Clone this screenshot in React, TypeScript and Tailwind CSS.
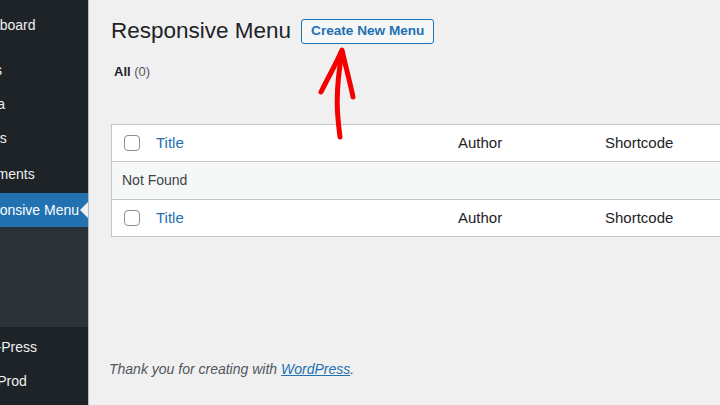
const font = { fontFamily: '"Liberation Sans", Arial, sans-serif' }

function SideItem({ label, active, shift = 'ml-[-33px]' }: { label: string; active?: boolean; shift?: string }) {
  return (
    <div
      className={
        'relative flex h-[34px] items-center text-[14px] ' +
        (active ? 'bg-[#2271b1] text-white' : 'text-[#f0f0f1]')
      }
    >
      <span className={'whitespace-nowrap ' + shift}>{label}</span>
      {active && (
        <span className="absolute right-0 top-1/2 -translate-y-1/2 border-y-[8px] border-r-[8px] border-y-transparent border-r-[#f0f0f1]" />
      )}
    </div>
  )
}

function Checkbox() {
  return <span className="block h-[16px] w-[16px] rounded-[4px] border border-[#8c8f94] bg-white" />
}

function HeadRow({ border }: { border: string }) {
  return (
    <div className={'flex h-[37px] items-center bg-white pl-[12px] text-[15px] ' + border}>
      <Checkbox />
      <span className="ml-[16px] w-[302px] text-[#2271b1]">Title</span>
      <span className="w-[147px] text-[#1d2327]">Author</span>
      <span className="text-[#1d2327]">Shortcode</span>
    </div>
  )
}

export default function App() {
  return (
    <div className="flex h-[405px] w-[720px] overflow-hidden bg-[#f0f0f1]" style={font}>
      <aside className="flex w-[89px] shrink-0 flex-col overflow-hidden border-r border-[#b9bbbe] bg-[#1d2327]">
        <div className="pt-[8px]">
          <SideItem label="Dashboard" />
        </div>
        <div className="mt-[11px]">
          <SideItem label="Posts" />
          <SideItem label="Media" />
          <SideItem label="Pages" />
          <div className="mt-[2px]">
            <SideItem label="Comments" />
          </div>
          <div className="mt-[2px]">
            <SideItem label="Responsive Menu" active />
          </div>
        </div>
        <div className="h-[100px] bg-[#2c3338]" />
        <div className="pt-[3px]">
          <SideItem label="WP-Press" shift="ml-[-26px]" />
          <SideItem label="WP Prod" shift="ml-[-29px]" />
        </div>
      </aside>

      <main className="relative flex min-w-0 flex-1 flex-col pl-[22px] pt-[19px]">
        <div className="flex h-[25px] items-center">
          <h1 className="text-[22.5px] leading-none text-[#1d2327]">Responsive Menu</h1>
          <button className="ml-[10px] h-[25px] rounded-[3px] border border-[#2271b1] bg-[#f6f7f7] px-[9px] text-[13.6px] font-semibold text-[#2271b1]">
            Create New Menu
          </button>
        </div>

        <div className="mt-[20px] pl-[3px] text-[13px] leading-[16px]">
          <span className="font-bold text-[#1d2327]">All</span>{' '}
          <span className="text-[#50575e]">(0)</span>
        </div>

        <div className="mt-[44px] w-[640px] shrink-0 border border-[#c3c4c7]">
          <HeadRow border="border-b border-[#c3c4c7]" />
          <div className="flex h-[37px] items-center bg-[#f6f7f7] pl-[10px] text-[14px] text-[#3c434a]">
            Not Found
          </div>
          <HeadRow border="border-t border-[#c3c4c7]" />
        </div>

        <p className="ml-[-2px] mt-[122px] text-[14px] italic text-[#50575e]">
          Thank you for creating with{' '}
          <a className="text-[#2271b1] underline">WordPress</a>.
        </p>

        <svg className="absolute left-[211px] top-[44px]" width="60" height="100" viewBox="0 0 60 100">
          <path
            d="M40 93 C38 75 34 55 42 8"
            fill="none"
            stroke="#f50000"
            strokeWidth="5"
            strokeLinecap="round"
          />
          <path
            d="M21 48 C30 30 37 18 42 6 C45 20 50 38 53 53"
            fill="none"
            stroke="#f50000"
            strokeWidth="5"
            strokeLinecap="round"
            strokeLinejoin="round"
          />
        </svg>
      </main>
    </div>
  )
}
